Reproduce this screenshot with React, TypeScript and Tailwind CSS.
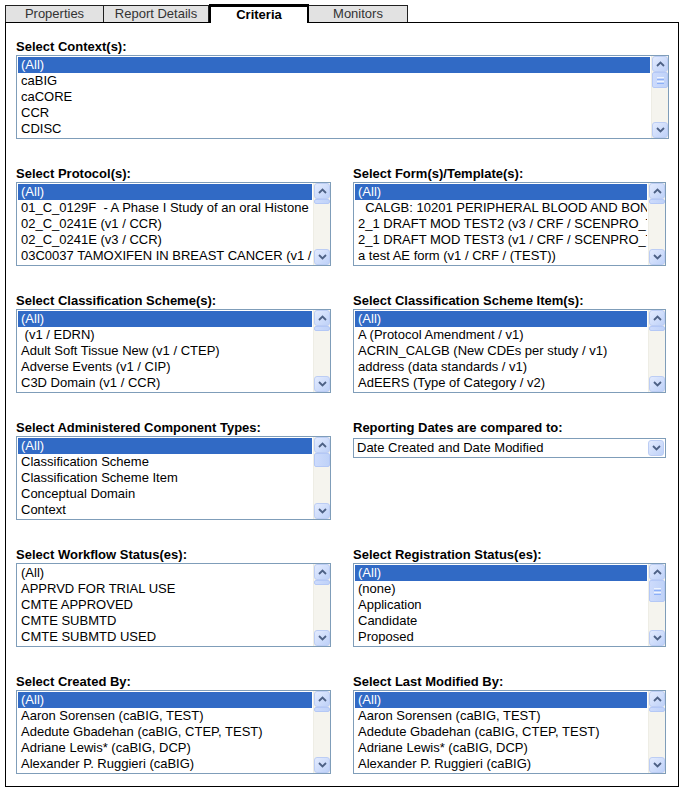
import React from "react";

const FONT = { fontFamily: '"Liberation Sans", Arial, sans-serif' };

function Arrow({ dir }: { dir: "up" | "down" }) {
  return (
    <svg width="9" height="6" viewBox="0 0 9 6">
      {dir === "up" ? (
        <path d="M1 5 L4.5 1.5 L8 5" fill="none" stroke="#4d6185" strokeWidth="1.8" />
      ) : (
        <path d="M1 1 L4.5 4.5 L8 1" fill="none" stroke="#4d6185" strokeWidth="1.8" />
      )}
    </svg>
  );
}

function SBtn({ dir }: { dir: "up" | "down" }) {
  return (
    <div className="h-[16px] w-[16px] flex items-center justify-center rounded-[3px] border border-[#bccdf4] bg-gradient-to-br from-[#e3ebfe] to-[#bed1f8]">
      <Arrow dir={dir} />
    </div>
  );
}

function Scrollbar({ thumbTop, thumbH }: { thumbTop: number; thumbH: number }) {
  return (
    <div className="w-[17px] h-full flex flex-col bg-[#f5f4ee] border-l border-[#eeede5] items-center">
      <SBtn dir="up" />
      <div className="flex-1 w-full flex flex-col items-center">
        <div
          className="w-[16px] rounded-[2px] border border-[#b4c8f6] bg-gradient-to-r from-[#cddbfc] to-[#bfd2f8] flex flex-col items-center justify-center gap-[1px]"
          style={{ marginTop: thumbTop, height: thumbH }}
        >
          {thumbH > 14 && (
            <>
              <div className="w-[7px] h-[1px] bg-[#eef4fe]" />
              <div className="w-[7px] h-[1px] bg-[#8cb0f8]" />
              <div className="w-[7px] h-[1px] bg-[#eef4fe]" />
              <div className="w-[7px] h-[1px] bg-[#8cb0f8]" />
            </>
          )}
        </div>
      </div>
      <SBtn dir="down" />
    </div>
  );
}

function ListBox({
  items,
  selected = 0,
  thumbTop = 0,
  thumbH = 6,
}: {
  items: string[];
  selected?: number;
  thumbTop?: number;
  thumbH?: number;
}) {
  return (
    <div className="flex h-[84px] border border-[#7f9db9] bg-white">
      <div className="flex-1 min-w-0 p-[1px] overflow-hidden">
        {items.map((t, i) => (
          <div
            key={i}
            className={
              "h-4 leading-4 pl-[3px] whitespace-pre overflow-hidden text-[13px] " +
              (i === selected ? "bg-[#316ac5] text-white" : "text-black")
            }
          >
            {t}
          </div>
        ))}
      </div>
      <Scrollbar thumbTop={thumbTop} thumbH={thumbH} />
    </div>
  );
}

function Label({ children }: { children: React.ReactNode }) {
  return <div className="h-4 leading-[15px] text-[13px] font-bold text-black">{children}</div>;
}

function Field({ label, children }: { label: string; children: React.ReactNode }) {
  return (
    <div className="flex flex-col">
      <Label>{label}</Label>
      {children}
    </div>
  );
}

function Tab({ children, active, w }: { children: React.ReactNode; active?: boolean; w: string }) {
  if (active) {
    return (
      <div
        className={
          w +
          " h-[19px] bg-white border-t-[3px] border-x-2 border-black text-center text-[13px] font-bold leading-[16px] text-black -mb-[1px] relative z-10"
        }
      >
        {children}
      </div>
    );
  }
  return (
    <div
      className={
        w +
        " h-[17px] bg-[#e2e2e2] border-t border-r border-[#202020] text-center text-[13px] leading-[16px] text-[#333]"
      }
    >
      {children}
    </div>
  );
}

const PEOPLE = [
  "(All)",
  "Aaron Sorensen (caBIG, TEST)",
  "Adedute Gbadehan (caBIG, CTEP, TEST)",
  "Adriane Lewis* (caBIG, DCP)",
  "Alexander P. Ruggieri (caBIG)",
];

export default function App() {
  return (
    <div className="w-[685px] h-[791px] bg-white pt-[4px]" style={FONT}>
      <div className="flex items-end ml-[5px] h-[18px]">
        <Tab w="w-[99px] border-l">Properties</Tab>
        <Tab w="w-[105px]">Report Details</Tab>
        <Tab active w="w-[100px]">Criteria</Tab>
        <Tab w="w-[99px]">Monitors</Tab>
      </div>
      <div className="ml-[5px] w-[674px] h-[765px] border border-black pt-[16px] pl-[10px] pr-[9px] flex flex-col gap-[27px]">
        <Field label="Select Context(s):">
          <ListBox items={["(All)", "caBIG", "caCORE", "CCR", "CDISC"]} thumbTop={0} thumbH={16} />
        </Field>
        <div className="grid grid-cols-[315px_313px] gap-x-[22px] gap-y-[27px]">
          <Field label="Select Protocol(s):">
            <ListBox
              items={[
                "(All)",
                "01_C_0129F  - A Phase I Study of an oral Histone Deacetylase",
                "02_C_0241E (v1 / CCR)",
                "02_C_0241E (v3 / CCR)",
                "03C0037 TAMOXIFEN IN BREAST CANCER (v1 / CCR)",
              ]}
              thumbTop={0}
              thumbH={5}
            />
          </Field>
          <Field label="Select Form(s)/Template(s):">
            <ListBox
              items={[
                "(All)",
                "  CALGB: 10201 PERIPHERAL BLOOD AND BONE MARROW",
                "2_1 DRAFT MOD TEST2 (v3 / CRF / SCENPRO_TEST)",
                "2_1 DRAFT MOD TEST3 (v1 / CRF / SCENPRO_TEST)",
                "a test AE form (v1 / CRF / (TEST))",
              ]}
              thumbTop={0}
              thumbH={5}
            />
          </Field>
          <Field label="Select Classification Scheme(s):">
            <ListBox
              items={[
                "(All)",
                " (v1 / EDRN)",
                "Adult Soft Tissue New (v1 / CTEP)",
                "Adverse Events (v1 / CIP)",
                "C3D Domain (v1 / CCR)",
              ]}
              thumbTop={0}
              thumbH={5}
            />
          </Field>
          <Field label="Select Classification Scheme Item(s):">
            <ListBox
              items={[
                "(All)",
                "A (Protocol Amendment / v1)",
                "ACRIN_CALGB (New CDEs per study / v1)",
                "address (data standards / v1)",
                "AdEERS (Type of Category / v2)",
              ]}
              thumbTop={0}
              thumbH={5}
            />
          </Field>
          <Field label="Select Administered Component Types:">
            <ListBox
              items={[
                "(All)",
                "Classification Scheme",
                "Classification Scheme Item",
                "Conceptual Domain",
                "Context",
              ]}
              thumbTop={0}
              thumbH={14}
            />
          </Field>
          <Field label="Reporting Dates are compared to:">
            <div className="mt-[2px] flex h-[20px] border border-[#7f9db9] bg-white items-center">
              <div className="flex-1 pl-[3px] text-[13px] leading-4 text-black">Date Created and Date Modified</div>
              <div className="pr-[1px]">
                <SBtn dir="down" />
              </div>
            </div>
          </Field>
          <Field label="Select Workflow Status(es):">
            <ListBox
              items={["(All)", "APPRVD FOR TRIAL USE", "CMTE APPROVED", "CMTE SUBMTD", "CMTE SUBMTD USED"]}
              selected={-1}
              thumbTop={0}
              thumbH={5}
            />
          </Field>
          <Field label="Select Registration Status(es):">
            <ListBox
              items={["(All)", "(none)", "Application", "Candidate", "Proposed"]}
              thumbTop={0}
              thumbH={22}
            />
          </Field>
          <Field label="Select Created By:">
            <ListBox items={PEOPLE} thumbTop={0} thumbH={5} />
          </Field>
          <Field label="Select Last Modified By:">
            <ListBox items={PEOPLE} thumbTop={0} thumbH={5} />
          </Field>
        </div>
      </div>
    </div>
  );
}
